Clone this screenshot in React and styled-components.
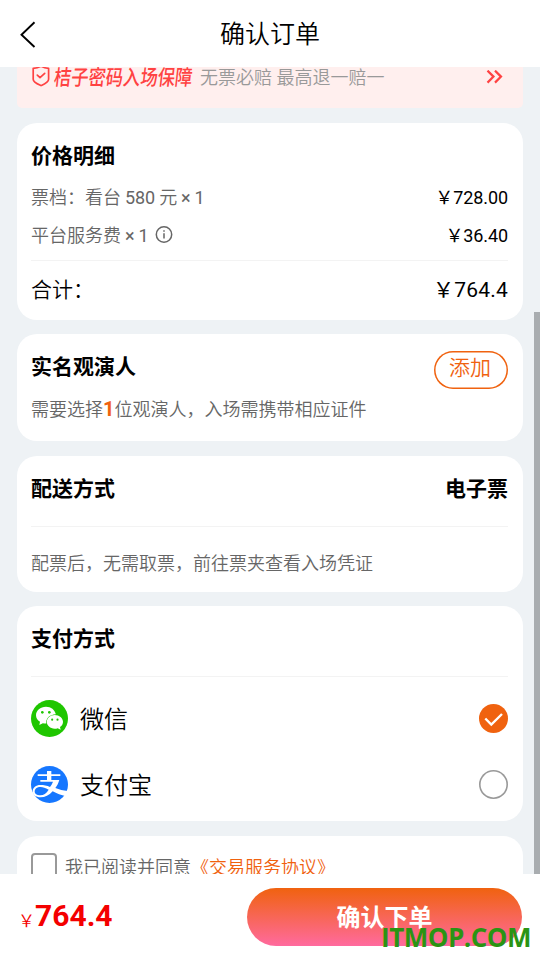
import { useState } from "react";
import styled, { createGlobalStyle } from "styled-components";

const App = () => {
    const [payment, setPayment] = useState("wechat");

    return (
        <>
            <GlobalStyle />
            <Page>
                <Header>
                    <BackIcon />
                    <Title>确认订单</Title>
                </Header>
                <Content>
                    <Guarantee>
                        <ShieldIcon />
                        <Slogan>桔子密码入场保障</Slogan>
                        <span>无票必赔 最高退一赔一</span>
                        <MoreIcon />
                    </Guarantee>

                    <Card $height={197} $gap={14}>
                        <Heading $top={15}>价格明细</Heading>
                        <PriceRow $top={9}>
                            <span>票档：看台 <Num>580</Num> 元 <Num>× 1</Num></span>
                            <Price>￥728.00</Price>
                        </PriceRow>
                        <PriceRow $top={8}>
                            <span>平台服务费 <Num>× 1</Num></span>
                            <InfoIcon />
                            <Price>￥36.40</Price>
                        </PriceRow>
                        <Divider $top={11} />
                        <Total>
                            <span>合计：</span>
                            <Price $wide>￥764.4</Price>
                        </Total>
                    </Card>

                    <Card $height={107} $gap={15}>
                        <HeadRow>
                            <Heading $top={15}>实名观演人</Heading>
                            <AddButton>添加</AddButton>
                        </HeadRow>
                        <Note $top={5}>
                            需要选择<Count>1</Count>位观演人，入场需携带相应证件
                        </Note>
                    </Card>

                    <Card $height={136} $gap={14}>
                        <HeadRow>
                            <Heading $top={15}>配送方式</Heading>
                            <Heading $top={15}>电子票</Heading>
                        </HeadRow>
                        <Divider $top={21} />
                        <Note $top={22}>配票后，无需取票，前往票夹查看入场凭证</Note>
                    </Card>

                    <Card $height={215} $gap={15}>
                        <Heading $top={15}>支付方式</Heading>
                        <Divider $top={21} />
                        <PayList>
                            <PayRow onClick={() => setPayment("wechat")}>
                                <WechatIcon />
                                <span>微信</span>
                                <Radio $checked={payment === "wechat"}>
                                    {payment === "wechat" && <CheckIcon />}
                                </Radio>
                            </PayRow>
                            <PayRow onClick={() => setPayment("alipay")}>
                                <AlipayIcon />
                                <span>支付宝</span>
                                <Radio $checked={payment === "alipay"}>
                                    {payment === "alipay" && <CheckIcon />}
                                </Radio>
                            </PayRow>
                        </PayList>
                    </Card>

                    <Card $height={80} $gap={0}>
                        <Agreement>
                            <Checkbox />
                            <span>我已阅读并同意</span>
                            <Terms>《交易服务协议》</Terms>
                        </Agreement>
                    </Card>
                    <ScrollThumb />
                </Content>
                <Footer>
                    <Yen>￥</Yen>
                    <Amount>764.4</Amount>
                    <Submit>确认下单</Submit>
                </Footer>
                <Watermark>ITMOP.COM</Watermark>
            </Page>
        </>
    );
};

const BackIcon = () => (
    <svg width="16" height="28" viewBox="0 0 16 28" fill="none" stroke="#000" strokeWidth="1.9">
        <path d="M14.5 1.3 1.5 13.7 14.5 26" />
    </svg>
);

const ShieldIcon = () => (
    <svg width="18" height="22" viewBox="0 0 18 22" fill="none" stroke="#ff4242" strokeWidth="1.7" strokeLinejoin="round" strokeLinecap="round">
        <path d="M9 -.8C6.500 .700 4 1.300 1.200 1.300V12.200C1.200 15.200 6 17.200 9 18.600 12 17.200 16.600 15.200 16.600 12.200V1.300C14 1.300 11.500 .700 9 -.8Z" />
        <path d="M5.300 8.200 8 10.700 12.700 6.300" />
    </svg>
);

const MoreIcon = () => (
    <svg width="17" height="15" viewBox="0 0 17 15" fill="none" stroke="#ff4242" strokeWidth="2.200">
        <path d="M1.500 .6 7.500 6.600 1.500 12.600M9 .6 15 6.600 9 12.600" />
    </svg>
);

const InfoIcon = () => (
    <svg width="18" height="18" viewBox="0 0 18 18" fill="none" stroke="#666" strokeWidth="1.500">
        <circle cx="9" cy="9.500" r="7.700" />
        <path d="M9 8.200V13.500M9 5.200V6.800" />
    </svg>
);

const WechatIcon = () => (
    <svg width="37" height="37" viewBox="0 0 111 111">
        <circle cx="55.500" cy="55.500" r="55.500" fill="#1fc600" />
        <path d="M45 20C28 20 15 31 15 45.500 15 54 19.500 60.500 27 65L25 75 35.500 69.500C38.500 70.300 42 70.800 46 70.800 44 55 55 43.500 74.500 42.500 71.500 29 60 20 45 20Z" fill="#fff" />
        <path d="M71 45C57.500 45 47.500 54 47.500 65.500S57.500 86 71 86C74.500 86 77.500 85.500 80 84.500L89 89 87 81C93 77.500 96 72 96 65.500 96 54 85 45 71 45Z" fill="#fff" />
        <g fill="#1fc600">
            <circle cx="34" cy="37" r="4" />
            <circle cx="55" cy="37" r="4" />
            <circle cx="63.500" cy="59" r="3.200" />
            <circle cx="79.500" cy="59" r="3.200" />
        </g>
    </svg>
);

const AlipayIcon = () => (
    <svg width="37" height="37" viewBox="0 0 111 111">
        <circle cx="55.500" cy="55.500" r="55.500" fill="#1677ff" />
        <path d="M48 15H61V25H88V30H61V42H85C82 52 78 60 73 66 85 71 96 74 110 75L105 91C91 88 77 82 65 76 54 88 42 94 29 94 14 94 5 87 5 76 5 65 15 57 28 57 38 57 48 59 57 63 61 58 64 53 66 47H28V42H48V30H20V25H48ZM29 63C17 63 11 69 11 76 11 84 18 88 28 88 38 88 46 82 53 71 43 66 36 63 29 63Z" fill="#fff" fillRule="evenodd" />
    </svg>
);

const CheckIcon = () => (
    <svg width="29" height="29" viewBox="0 0 29 29" fill="none" stroke="#fff" strokeWidth="2.400">
        <path d="M6.300 14.500 12.300 20.500 23 10" />
    </svg>
);

const GlobalStyle = createGlobalStyle`
* {
    box-sizing: border-box;
}
body {
    margin: 0;
    font-family: Roboto, "Noto Sans CJK SC", sans-serif;
    font-weight: 350;
}
button {
    font-family: inherit;
    font-weight: inherit;
    padding: 0;
    cursor: pointer;
}
svg {
    display: block;
    flex: none;
}
`;

const Page = styled.div`
position: relative;
display: flex;
flex-direction: column;
width: 540px;
height: 960px;
overflow: hidden;
background: #eef2f5;
color: #000;
white-space: nowrap;
`;

const Header = styled.header`
display: flex;
align-items: center;
flex: none;
height: 67px;
padding: 2px 20px 0;
background: #fff;
`;

const Title = styled.h1`
flex: 1;
margin: 0 16px 0 0;
font-size: 25px;
font-weight: 350;
line-height: 36px;
text-align: center;
`;

const Content = styled.main`
position: relative;
display: flex;
flex-direction: column;
justify-content: flex-start;
flex: 1;
min-height: 0;
padding: 0 17px;
overflow: hidden;
`;

const Guarantee = styled.div`
display: flex;
align-items: center;
flex: none;
height: 62px;
margin: -21px 0 15px;
padding: 1px 20px 0 15px;
border-radius: 5px;
background: #ffefee;
color: #999;
font-size: 18px;
line-height: 26px;

svg:last-child {
    margin-left: auto;
}
`;

const Slogan = styled.b`
width: 140px;
margin: 0 6px 0 4px;
color: #ff4242;
font-size: 20px;
font-weight: 500;
transform: scale(0.865, 1.06) skewX(-8deg);
transform-origin: left center;
`;

const Card = styled.section`
flex: none;
height: ${({ $height }) => $height}px;
margin-bottom: ${({ $gap }) => $gap}px;
padding: 2px 15px 0 14px;
border-radius: 20px;
background: #fff;
`;

const Heading = styled.h2`
margin: ${({ $top }) => $top}px 0 0;
font-size: 21px;
font-weight: 700;
line-height: 32px;
`;

const HeadRow = styled.div`
display: flex;
justify-content: space-between;
align-items: flex-start;
`;

const PriceRow = styled.div`
display: flex;
align-items: center;
margin-top: ${({ $top }) => $top}px;
height: 30px;
color: #666;
font-size: 18px;
word-spacing: -0.5px;

svg {
    margin-left: 6px;
}
`;

const Num = styled.span`
font-weight: 400;
`;

const Price = styled.span`
margin-left: auto;
color: #000;
font-weight: 400;
letter-spacing: ${({ $wide }) => ($wide ? "0.2px" : "-0.1px")};
`;

const Divider = styled.div`
height: 1px;
margin-top: ${({ $top }) => $top}px;
background: #f3f3f3;
`;

const Total = styled.div`
display: flex;
align-items: center;
height: 58px;
font-size: 21px;
line-height: 30px;
`;

const AddButton = styled.button`
width: 74px;
height: 38px;
margin-top: 15px;
padding: 0 2px 4px 0;
border: none;
border-radius: 19px;
box-shadow: inset 0 0 0 1.5px #f0620f;
background: #fff;
color: #f0620f;
font-size: 21px;
line-height: 30px;
`;

const Note = styled.p`
margin: ${({ $top }) => $top}px 0 0;
color: #666;
font-size: 18px;
line-height: 30px;
`;

const Count = styled.b`
color: #f0620f;
font-size: 20px;
`;

const PayList = styled.div`
display: flex;
flex-direction: column;
gap: 29px;
padding-top: 23px;
`;

const PayRow = styled.div`
display: flex;
align-items: center;
gap: 12px;
height: 37px;
font-size: 24px;
cursor: pointer;

span {
    padding-bottom: 2px;
}
`;

const Radio = styled.div`
width: 29px;
height: 29px;
margin-left: auto;
border-radius: 50%;
box-shadow: ${({ $checked }) => ($checked ? "none" : "inset 0 0 0 1.6px #999")};
background: ${({ $checked }) => ($checked ? "#f0620f" : "#fff")};
`;

const Agreement = styled.div`
display: flex;
align-items: center;
height: 28px;
margin-top: 14px;
color: #666;
font-size: 18px;
`;

const Checkbox = styled.div`
width: 26px;
height: 26px;
margin-right: 8px;
border: 2px solid #999;
border-radius: 4px;
`;

const Terms = styled.span`
color: #f0620f;
`;

const ScrollThumb = styled.div`
position: absolute;
top: 245px;
right: 0;
bottom: 0;
width: 6px;
background: #a9adb0;
`;

const Footer = styled.footer`
display: flex;
align-items: center;
flex: none;
height: 86px;
padding: 0 18px;
background: #fff;
color: #f40000;
`;

const Yen = styled.span`
margin-top: 5px;
font-size: 17px;
`;

const Amount = styled.b`
padding-bottom: 2px;
font-size: 30px;
line-height: 36px;
`;

const Submit = styled.button`
width: 275px;
height: 58px;
margin-left: auto;
padding-bottom: 3px;
border: none;
border-radius: 29px;
background: linear-gradient(#f0620f, #ff6a9e);
color: #fff;
font-size: 24px;
font-weight: 700;
`;

const Watermark = styled.div`
position: absolute;
right: 9px;
bottom: 6px;
color: #2a9413;
font-family: "Open Sans", sans-serif;
font-size: 26px;
font-weight: 700;
line-height: 34px;
letter-spacing: -0.5px;
`;

export default App;
